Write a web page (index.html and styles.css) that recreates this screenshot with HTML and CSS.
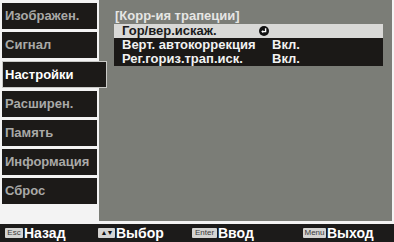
FILE: index.html
```html
<!DOCTYPE html>
<html lang="ru">
<head>
  <meta charset="UTF-8" />
  <title>Настройки</title>
  <link rel="stylesheet" href="styles.css">
</head>
<body>

  <div class="screen">
    <div class="main">
      <ul class="tabs">
        <li class="tab">Изображен.</li>
        <li class="tab">Сигнал</li>
        <li class="tab active">Настройки</li>
        <li class="tab">Расширен.</li>
        <li class="tab">Память</li>
        <li class="tab">Информация</li>
        <li class="tab">Сброс</li>
      </ul>

      <div class="panel">
        <div class="panelTitle">[Корр-ия трапеции]</div>
        <div class="rows">
          <div class="row selected">
            <span class="rowName">Гор/вер.искаж.</span>
            <span class="rowValue">
              <svg class="enterIcon" width="10" height="10" viewBox="0 0 10 10">
                <circle cx="5" cy="5" r="5" fill="#111"/>
                <path d="M6.6 2.2 V5.6 H3.6" fill="none" stroke="#fff" stroke-width="1.4"/>
                <path d="M2.2 5.6 L4.2 4 V7.2 Z" fill="#fff"/>
              </svg>
            </span>
          </div>
          <div class="row">
            <span class="rowName">Верт. автокоррекция</span>
            <span class="rowValue">Вкл.</span>
          </div>
          <div class="row">
            <span class="rowName">Рег.гориз.трап.иск.</span>
            <span class="rowValue">Вкл.</span>
          </div>
        </div>
      </div>
    </div>

    <div class="hints">
      <div class="hint hintBack"><span class="key keyEsc">Esc</span>Назад</div>
      <div class="hint hintSelect"><span class="key keyArrows">▲▼</span>Выбор</div>
      <div class="hint hintEnter"><span class="key keyEnter">Enter</span>Ввод</div>
      <div class="hint hintExit"><span class="key keyMenu">Menu</span>Выход</div>
    </div>
  </div>

</body>
</html>
```

FILE: styles.css
```css
body {
  margin: 0;
  background-color: #f3f3f3;
  font-family: "Liberation Sans", Arial, sans-serif;
  font-weight: bold;
}

.screen {
  width: 394px;
  height: 242px;
  display: flex;
  flex-direction: column;
}

.main {
  height: 224px;
  display: flex;
}

.tabs {
  list-style: none;
  margin: 0;
  padding: 3px 0 0 2px;
  width: 95px;
  display: flex;
  flex-direction: column;
  gap: 3px;
}

.tab {
  height: 26px;
  line-height: 26px;
  padding-left: 3px;
  background-color: #1c1a18;
  color: #a9a9a7;
  font-size: 13px;
  white-space: nowrap;
}

.tab.active {
  position: relative;
  z-index: 1;
  margin-right: -10px;
  height: 27px;
  line-height: 25px;
  border: 1px solid #c9c9c6;
  box-sizing: border-box;
  padding-left: 2px;
  color: #ffffff;
}

.panel {
  flex: 1;
  height: 221px;
  margin: 0 2px;
  background-color: #7b7d77;
  padding: 8px 9px 0 15px;
  box-sizing: border-box;
}

.panelTitle {
  color: #e6e6e4;
  font-size: 13px;
  height: 16px;
  line-height: 16px;
  padding-left: 1px;
}

.rows {
  display: flex;
  flex-direction: column;
}

.row {
  height: 14px;
  line-height: 14px;
  display: flex;
  background-color: #1b1917;
  color: #f2f2f2;
  font-size: 13px;
}

.row.selected {
  background-color: #d9d9d7;
  color: #1a1a1a;
}

.rowName {
  width: 150px;
  padding-left: 8px;
  white-space: nowrap;
}

.rowValue {
  display: flex;
  align-items: center;
}

.enterIcon {
  margin-left: -13px;
}

.hints {
  height: 18px;
  background-color: #1c1b1a;
  display: flex;
  align-items: center;
  padding-left: 5px;
  color: #ffffff;
  font-size: 14px;
}

.hint {
  display: flex;
  align-items: center;
}

.key {
  height: 10px;
  line-height: 10px;
  margin-right: 1px;
  background-color: #d4d4d2;
  color: #3a3a3a;
  font-size: 8px;
  font-weight: normal;
  text-align: center;
  border-radius: 1px;
}

.keyEsc {
  width: 18px;
}

.keyArrows {
  width: 17px;
  font-size: 7px;
  color: #111;
  letter-spacing: -1px;
}

.keyEnter {
  width: 25px;
}

.keyMenu {
  width: 23px;
}

.hintBack {
  width: 93px;
}

.hintSelect {
  width: 94px;
}

.hintEnter {
  width: 111px;
}
```
